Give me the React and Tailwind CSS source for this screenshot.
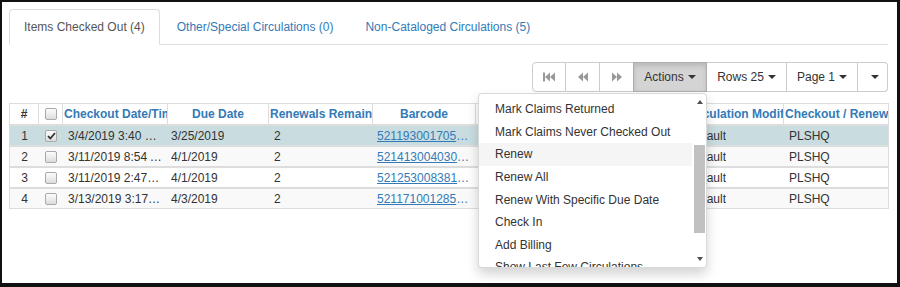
import React from 'react'

const rows = [
  { n: 1, checked: true, out: '3/4/2019 3:40 PM', due: '3/25/2019', renew: 2, barcode: '521193001705433', title: 'The Silent Patient', mod: 'Default', lib: 'PLSHQ' },
  { n: 2, checked: false, out: '3/11/2019 8:54 AM', due: '4/1/2019', renew: 2, barcode: '521413004030121', title: 'Educated : a memoir', mod: 'Default', lib: 'PLSHQ' },
  { n: 3, checked: false, out: '3/11/2019 2:47 PM', due: '4/1/2019', renew: 2, barcode: '521253008381776', title: 'Where the Crawdads Sing', mod: 'Default', lib: 'PLSHQ' },
  { n: 4, checked: false, out: '3/13/2019 3:17 PM', due: '4/3/2019', renew: 2, barcode: '521171001285904', title: 'Becoming', mod: 'Default', lib: 'PLSHQ' },
]

const actions = [
  'Mark Claims Returned',
  'Mark Claims Never Checked Out',
  'Renew',
  'Renew All',
  'Renew With Specific Due Date',
  'Check In',
  'Add Billing',
  'Show Last Few Circulations',
  'Mark Item Lost',
]

const cols = 'grid grid-cols-[29px_24px_105px_101px_104px_103px_208px_100px_104px]'

function Caret({ color = '#333' }) {
  return <span className="inline-block w-0 h-0 border-x-[4px] border-x-transparent border-t-[4px] ml-1 align-middle" style={{ borderTopColor: color }} />
}

function Check({ checked }) {
  return (
    <div className="w-[12px] h-[12px] rounded-[2px] border border-[#a9a9a9] bg-gradient-to-b from-[#fdfdfd] to-[#dcdcdc] flex items-center justify-center">
      {checked && (
        <svg width="9" height="8" viewBox="0 0 9 8">
          <path d="M1 4.2 L3.4 6.5 L8 1" fill="none" stroke="#333" strokeWidth="1.8" />
        </svg>
      )}
    </div>
  )
}

function NavIcon({ kind }) {
  return (
    <svg width="12" height="10" viewBox="0 0 12 10" fill="#999">
      {kind === 'first' && (
        <>
          <rect x="0" y="0.5" width="2" height="9" />
          <path d="M7 0.5 L2 5 L7 9.5 Z" />
          <path d="M12 0.5 L7 5 L12 9.5 Z" />
        </>
      )}
      {kind === 'prev' && (
        <>
          <path d="M6 0.5 L1 5 L6 9.5 Z" />
          <path d="M11 0.5 L6 5 L11 9.5 Z" />
        </>
      )}
      {kind === 'next' && (
        <>
          <path d="M1 0.5 L6 5 L1 9.5 Z" />
          <path d="M6 0.5 L11 5 L6 9.5 Z" />
        </>
      )}
    </svg>
  )
}

export default function App() {
  return (
    <div className="relative w-[900px] h-[287px] box-border bg-white border-[#111] border-t-[2px] border-l-[2px] border-r-[3px] border-b-[4px] overflow-hidden text-[12px] text-[#333]" style={{ fontFamily: '"Liberation Sans", Arial, sans-serif' }}>
      <div className="pl-[7px] pt-[7px] w-[886px]">
        {/* tabs */}
        <div className="flex gap-[2px] border-b border-[#ddd] h-[36px] w-[879px]">
          <div className="h-[36px] px-[14px] flex items-center border border-[#ddd] border-b-white rounded-t-[4px] bg-white text-[#555] -mb-px">
            Items Checked Out (4)
          </div>
          <div className="h-[35px] px-[15px] flex items-center text-[#337ab7]">Other/Special Circulations (0)</div>
          <div className="h-[35px] px-[15px] flex items-center text-[#337ab7]">Non-Cataloged Circulations (5)</div>
        </div>

        {/* toolbar */}
        <div className="flex justify-end w-[879px] mt-[17px]">
          <div className="flex h-[30px]">
            <div className="w-[34px] flex items-center justify-center border border-[#ccc] rounded-l-[4px]"><NavIcon kind="first" /></div>
            <div className="w-[34px] flex items-center justify-center border border-l-0 border-[#ccc]"><NavIcon kind="prev" /></div>
            <div className="w-[34px] flex items-center justify-center border border-l-0 border-[#ccc]"><NavIcon kind="next" /></div>
            <div className="w-[74px] flex items-center justify-center border border-[#adadad] -ml-px bg-[#d4d4d4] shadow-[inset_0_3px_5px_rgba(0,0,0,0.125)]">Actions<Caret /></div>
            <div className="w-[80px] flex items-center justify-center border border-l-0 border-[#ccc]">Rows 25<Caret /></div>
            <div className="w-[71px] flex items-center justify-center border border-l-0 border-[#ccc]">Page 1<Caret /></div>
            <div className="w-[30px] flex items-center justify-center border border-l-0 border-[#ccc] rounded-r-[4px]"><Caret /></div>
          </div>
        </div>

        {/* grid */}
        <div className="mt-[11px] w-[880px] border border-[#ddd]">
          <div className={`${cols} h-[20px] font-bold text-[#337ab7]`}>
            <div className="flex items-center justify-center border-r border-[#ddd] text-[#333]">#</div>
            <div className="flex items-center justify-center border-r border-[#ddd]"><Check /></div>
            <div className="flex items-center px-[1px] border-r border-[#ddd] overflow-hidden whitespace-nowrap">Checkout Date/Time</div>
            <div className="flex items-center justify-center px-[2px] border-r border-[#ddd] overflow-hidden whitespace-nowrap">Due Date</div>
            <div className="flex items-center px-[1px] border-r border-[#ddd] overflow-hidden whitespace-nowrap">Renewals Remaining</div>
            <div className="flex items-center justify-center px-[2px] border-r border-[#ddd] overflow-hidden whitespace-nowrap">Barcode</div>
            <div className="flex items-center justify-center px-[2px] border-r border-[#ddd] overflow-hidden whitespace-nowrap">Title</div>
            <div className="flex items-center px-[2px] border-r border-[#ddd] overflow-hidden whitespace-nowrap">Circulation Modifier</div>
            <div className="flex items-center px-[1px] overflow-hidden whitespace-nowrap">Checkout / Renew Library</div>
          </div>
          {rows.map((r) => (
            <div key={r.n} className={`${cols} h-[21px] border-t-2 border-[#ddd] ${r.checked ? 'bg-[#c9dde1]' : r.n % 2 === 0 ? 'bg-[#f9f9f9]' : 'bg-white'}`}>
              <div className="flex items-center justify-center">{r.n}</div>
              <div className="flex items-center justify-center"><Check checked={r.checked} /></div>
              <div className="flex items-center pl-[5px] pr-[6px] overflow-hidden"><span className="truncate">{r.out}</span></div>
              <div className="flex items-center pl-[3px] overflow-hidden"><span className="truncate">{r.due}</span></div>
              <div className="flex items-center pl-[5px]">{r.renew}</div>
              <div className="flex items-center pl-[4px] pr-[5px] overflow-hidden"><span className="truncate text-[#337ab7] underline">{r.barcode}</span></div>
              <div className="flex items-center pl-[6px] overflow-hidden"><span className="truncate">{r.title}</span></div>
              <div className="flex items-center pl-[4px] overflow-hidden"><span className="truncate">{r.mod}</span></div>
              <div className="flex items-center pl-[5px] overflow-hidden"><span className="truncate">{r.lib}</span></div>
            </div>
          ))}
        </div>
      </div>

      {/* actions dropdown */}
      <div className="absolute left-[476px] top-[91px] w-[229px] h-[175px] bg-white border border-[rgba(0,0,0,0.15)] rounded-[4px] shadow-[0_6px_12px_rgba(0,0,0,0.175)] overflow-hidden">
        <div className="pt-[4px] pr-[14px]">
          {actions.map((a) => (
            <div key={a} className={`h-[22.6px] flex items-center pl-[16px] whitespace-nowrap ${a === 'Renew' ? 'bg-[#f5f5f5]' : ''}`}>{a}</div>
          ))}
        </div>
        <div className="absolute right-0 top-0 bottom-0 w-[13px] bg-white">
          <div className="flex justify-center pt-[6px]">
            <span className="w-0 h-0 border-x-[3px] border-x-transparent border-b-[4px] border-b-[#505050]" />
          </div>
          <div className="absolute left-[1px] right-[1px] top-[51px] h-[88px] bg-[#c1c1c1]" />
          <div className="absolute bottom-[6px] left-0 right-0 flex justify-center">
            <span className="w-0 h-0 border-x-[3px] border-x-transparent border-t-[4px] border-t-[#505050]" />
          </div>
        </div>
      </div>
    </div>
  )
}
